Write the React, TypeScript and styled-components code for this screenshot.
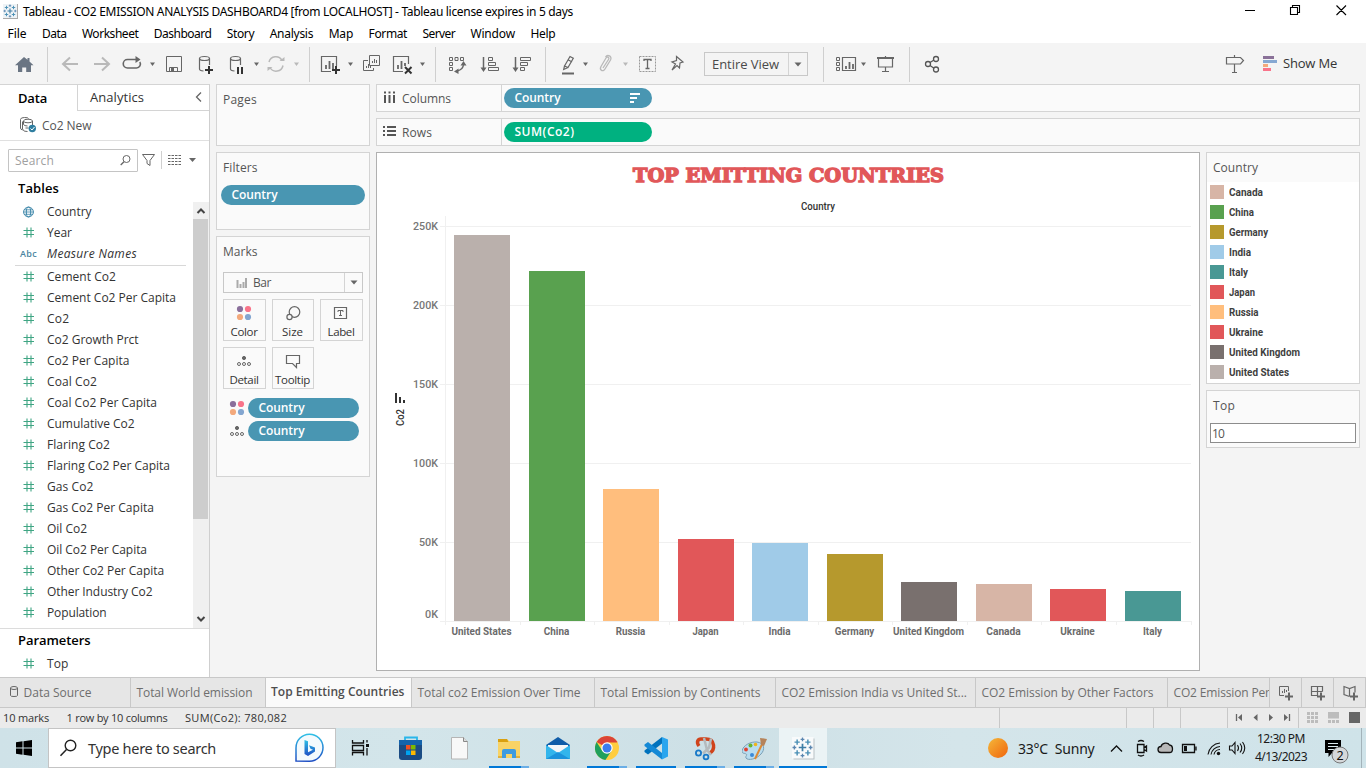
import React, { useLayoutEffect, useRef, useState } from "react";
import styled, { createGlobalStyle, css } from "styled-components";

const UI = `"Open Sans", "Noto Sans", sans-serif`;
const SYS = `"Noto Sans", "Open Sans", sans-serif`;
const COND = `Roboto, "Liberation Sans", sans-serif`;

const Global = createGlobalStyle`
  *, *::before, *::after { box-sizing: border-box; }
  body { margin: 0; overflow: hidden; background: #f4f4f4; font-family: ${UI}; }
  svg { display: block; flex: none; }
`;

/* ---------- text that keeps a set measure ---------- */

const Measure = styled.span<{ $w: number }>`
  display: inline-block;
  flex: none;
  width: ${(p) => p.$w}px;
  white-space: pre;
`;
const Ink = styled.span`
  display: inline-block;
  transform-origin: 0 50%;
`;

function Fit({ w, squeeze, children }: { w: number; squeeze?: boolean; children: string }) {
  const ref = useRef<HTMLSpanElement>(null);
  const [style, setStyle] = useState<React.CSSProperties>({});
  useLayoutEffect(() => {
    const natural = ref.current!.getBoundingClientRect().width;
    setStyle(
      squeeze
        ? { transform: `scaleX(${w / natural})` }
        : { letterSpacing: `${(w - natural) / children.length}px` }
    );
  }, []);
  return (
    <Measure $w={w}>
      <Ink ref={ref} style={style}>{children}</Ink>
    </Measure>
  );
}

/* An icon drawn on the window's own grid: the view box starts at (x, y). */
function Glyph({ x, y, w, h, children }: { x: number; y: number; w: number; h: number; children?: React.ReactNode }) {
  return (
    <svg width={w} height={h} viewBox={`${x} ${y} ${w} ${h}`} fill="none">
      {children}
    </svg>
  );
}

/* ---------- shell ---------- */

const Window = styled.div`
  width: 1366px;
  height: 768px;
  display: flex;
  flex-direction: column;
  background: #f4f4f4;
  overflow: hidden;
`;
const TitleBar = styled.div`
  height: 23px;
  display: flex;
  background: #fff;
  font: 12px/24px ${SYS};
  color: #000;
`;
const TitleText = styled.div`
  flex: 1;
  padding-left: 3px;
`;
const MenuBar = styled.div`
  height: 20px;
  padding-left: 7.5px;
  display: flex;
  gap: 15.45px;
  background: #fff;
  font: 12px/21px ${SYS};
  color: #000;
`;
const ToolBar = styled.div`
  height: 41px;
  display: flex;
  background: #f4f4f4;
`;
const ViewSelect = styled.div`
  width: 104px;
  height: 24px;
  margin-top: 9px;
  border: 1px solid #c8c8c8;
  display: flex;
  font: 13px/21px ${UI};
  color: #4a4a4a;
`;
const SelectLabel = styled.div<{ $pad: number }>`
  flex: 1;
  display: flex;
  align-items: center;
  padding-left: ${(p) => p.$pad}px;
`;
const SelectArrow = styled.div<{ $w: number }>`
  width: ${(p) => p.$w}px;
  border-left: 1px solid #d4d4d4;
  display: flex;
  align-items: center;
  justify-content: center;
`;
const ShowMe = styled.div`
  font: 13px/41px ${UI};
  color: #333;
`;
const Spacer = styled.div`
  flex: 1;
`;
const Workspace = styled.div`
  height: 593px;
  display: flex;
`;

/* ---------- data pane ---------- */

const DataPane = styled.aside`
  width: 210px;
  border-right: 1px solid #cfcfcf;
  border-top: 1px solid #d4d4d4;
  background: #fff;
  display: flex;
  flex-direction: column;
`;
const PaneTabs = styled.div`
  height: 26px;
  display: flex;
  font: 13px/26px ${UI};
`;
const DataTab = styled.div`
  width: 77px;
  padding-left: 18px;
  font-weight: 600;
  color: #000;
`;
const AnalyticsTab = styled.div`
  flex: 1;
  display: flex;
  justify-content: space-between;
  padding-left: 12px;
  border-left: 1px solid #d4d4d4;
  border-bottom: 1px solid #d4d4d4;
  line-height: 25px;
  color: #333;
`;
const Source = styled.div`
  height: 30px;
  display: flex;
  border-bottom: 1px solid #e0e0e0;
  font: 12px/29px ${UI};
  color: #555;
`;
const SearchRow = styled.div`
  height: 36px;
  padding: 8px 0 0 8px;
  display: flex;
`;
const SearchBox = styled.div`
  width: 130px;
  height: 23px;
  border: 1px solid #c4c4c4;
  border-radius: 1px;
  display: flex;
  justify-content: space-between;
  padding-left: 6px;
  font: 12px/22px ${UI};
  color: #a0a0a0;
`;
const Heading = styled.div<{ $h: number; $lh: number }>`
  height: ${(p) => p.$h}px;
  padding-left: 18px;
  font: 600 13px/${(p) => p.$lh}px ${UI};
  color: #000;
`;
const FieldArea = styled.div`
  height: 428px;
  display: flex;
  justify-content: space-between;
  border-bottom: 1px solid #dcdcdc;
`;
const FieldList = styled.div`
  width: 190px;
`;
const FieldRow = styled.div<{ $italic?: boolean }>`
  height: 21px;
  display: flex;
  align-items: center;
  padding-left: 20px;
  font: ${(p) => (p.$italic ? "italic" : "normal")} 12px/21px ${UI};
  color: #333;
`;
const FieldIcon = styled.div`
  width: 27px;
  font: 600 9px/21px ${UI};
  color: #4a84a0;
`;
const FieldRule = styled.div`
  height: 1px;
  margin: 1px 4px 0 15px;
  background: #d8d8d8;
`;
const ScrollBar = styled.div`
  width: 16px;
  margin-top: 1px;
  background: #f0f0f0;
  display: flex;
  flex-direction: column;
  justify-content: space-between;
`;
const ScrollThumb = styled.div`
  width: 15px;
  height: 300px;
  margin-bottom: auto;
  background: #cdcdcd;
`;

/* ---------- shelves & cards ---------- */

const CardColumn = styled.div`
  width: 154px;
  margin-left: 6px;
  display: flex;
  flex-direction: column;
  gap: 6px;
`;
const Card = styled.section<{ $h: number }>`
  height: ${(p) => p.$h}px;
  background: #fafafa;
  border: 1px solid #d4d4d4;
`;
const CardTitle = styled.div`
  height: 30px;
  padding-left: 6px;
  font: 12px/30px ${UI};
  color: #555;
`;
const Pill = styled.div<{ $w: number; $color?: string }>`
  width: ${(p) => p.$w}px;
  height: 20px;
  flex: none;
  border-radius: 10px;
  background: ${(p) => p.$color || "#4996b2"};
  display: flex;
  justify-content: space-between;
  padding-left: 10.5px;
  font: 600 12px/20px ${UI};
  color: #fff;
`;
const FilterSlot = styled.div`
  padding: 2px 0 0 4px;
`;
const MarkType = styled.div`
  width: 140px;
  height: 21px;
  margin: 5px 0 6px 6px;
  border: 1px solid #c8c8c8;
  display: flex;
  font: 12px/20px ${UI};
  color: #555;
`;
const MarkButtons = styled.div`
  display: grid;
  grid-template-columns: 43px 42px 43px;
  gap: 6px;
  padding-left: 6px;
`;
const MarkButton = styled.div`
  height: 42px;
  padding-right: 1px;
  border: 1px solid #d4d4d4;
  display: flex;
  flex-direction: column;
  align-items: center;
  font: 11.5px/15px ${UI};
  color: #333;
`;
const MarkPills = styled.div`
  padding: 9px 0 0 11px;
  display: flex;
  flex-direction: column;
  gap: 3px;
`;
const MarkPillRow = styled.div`
  display: flex;
  gap: 1px;
`;
const Main = styled.div`
  width: 984px;
  margin-left: 6px;
  display: flex;
  flex-direction: column;
  gap: 6px;
`;
const Shelf = styled.div`
  height: 28px;
  border: 1px solid #d4d4d4;
  background: #fafafa;
  display: flex;
`;
const ShelfName = styled.div`
  width: 125px;
  display: flex;
  border-right: 1px solid #d4d4d4;
  font: 12px/27px ${UI};
  color: #555;
`;
const ShelfPills = styled.div`
  padding: 3px 0 0 2px;
`;
const Stage = styled.div`
  display: flex;
  gap: 6px;
`;
const View = styled.div`
  width: 824px;
  height: 519px;
  border: 1px solid #b0b0b0;
  background: #fff;
`;
const Side = styled.div`
  width: 154px;
  display: flex;
  flex-direction: column;
  gap: 6px;
`;
const LegendBody = styled.div`
  height: 201px;
  margin-top: -1px;
  background: #fff;
  padding-left: 3px;
`;
const LegendItem = styled.div`
  height: 20px;
  display: flex;
  gap: 5px;
  align-items: center;
  font: 700 11.5px/20px ${COND};
  color: #3f3f3f;
`;
const Swatch = styled.div<{ $color: string }>`
  width: 14px;
  height: 14px;
  background: ${(p) => p.$color};
`;
const TopInput = styled.div`
  width: 146px;
  height: 20px;
  margin: 2px 0 0 3px;
  padding-left: 1px;
  border: 1px solid #8c8c8c;
  background: #fff;
  font: 12px/19px ${UI};
  color: #555;
`;

/* ---------- bottom ---------- */

const SheetTabs = styled.div`
  height: 31px;
  display: flex;
  border-top: 1px solid #c8c8c8;
  border-bottom: 1px solid #c8c8c8;
  background: #e6e6e6;
`;
const SheetTab = styled.div<{ $w: number; $active?: boolean }>`
  width: ${(p) => p.$w}px;
  flex: none;
  display: flex;
  padding-left: 5.5px;
  overflow: hidden;
  border-right: 1px solid #c8c8c8;
  font: 12px/30px ${UI};
  color: #6e6e6e;
  ${(p) =>
    p.$active &&
    css`
      background: #fafafa;
      font-weight: 600;
      line-height: 28px;
      color: #4e4e4e;
      padding-left: 5px;
    `}
`;
const NewSheet = styled.div`
  width: 32px;
  border-right: 1px solid #c8c8c8;
`;
const StatusBar = styled.div`
  height: 20px;
  display: flex;
  background: #ebebeb;
  font: 11px/20px ${UI};
  color: #333;
`;
const StatusText = styled.div`
  width: 1000px;
  padding-left: 3px;
  display: flex;
  gap: 17.5px;
  border-right: 1px solid #c8c8c8;
`;
const StatusCell = styled.div<{ $w: number }>`
  width: ${(p) => p.$w}px;
  border-right: 1px solid #c8c8c8;
`;
const TaskBar = styled.div`
  height: 40px;
  display: flex;
  background: linear-gradient(90deg, #cfe2e8, #d3e5ea 30%, #cde0e6 52%, #d4e5ea 70%, #cfe3e9);
  font-family: ${SYS};
  color: #1a1a1a;
`;
const TaskSearch = styled.div`
  width: 288px;
  border: 1px solid #c4c4c4;
  background: #fff;
  display: flex;
  font-size: 14.5px;
  line-height: 39px;
  color: #333;
`;
const TaskApp = styled.div<{ $w: number; $open?: boolean; $more?: boolean; $active?: boolean }>`
  width: ${(p) => p.$w}px;
  height: 40px;
  display: flex;
  flex-direction: column;
  align-items: center;
  background: ${(p) => (p.$active ? "#ebf3f5" : "none")};
  &::after {
    content: "";
    width: ${(p) => (p.$active ? 48 : 40)}px;
    height: 2px;
    background: ${(p) =>
      p.$active || (p.$open && !p.$more)
        ? "#0078d7"
        : p.$open
        ? "linear-gradient(90deg, #0078d7 32px, #6aaee6 32px)"
        : "none"};
  }
`;
const Weather = styled.div`
  width: 86px;
  font-size: 14px;
  line-height: 42px;
`;
const Clock = styled.div`
  width: 60px;
  display: flex;
  flex-direction: column;
  align-items: center;
  padding-top: 2px;
  font-size: 12px;
  line-height: 18px;
`;

/* ---------- small drawings ---------- */

const G = "#666";
const L = "#b9b9b9";
const Caret = ({ x, y = 64, c = G }: { x: number; y?: number; c?: string }) => (
  <path d={`M${x - 2.5} ${y - 1.5}h5l-2.5 3.5z`} fill={c} />
);
const Sep = ({ x }: { x: number }) => <path d={`M${x + 0.5} 47v35`} stroke="#cfcfcf" />;
const Plus = ({ x, y, c = "#333", r = 4 }: { x: number; y: number; c?: string; r?: number }) => (
  <path d={`M${x - r} ${y}h${2 * r}M${x} ${y - r}v${2 * r}`} stroke={c} strokeWidth="2" />
);
const Dots = ({ x, y, r = 3.1 }: { x: number; y: number; r?: number }) => (
  <g>
    <circle cx={x - 4} cy={y - 4} r={r} fill="#8a6f9b" />
    <circle cx={x + 4} cy={y - 4} r={r} fill="#f9748a" />
    <circle cx={x - 4} cy={y + 4} r={r} fill="#f3a97c" />
    <circle cx={x + 4} cy={y + 4} r={r} fill="#83a6d0" />
  </g>
);
const DetailDots = ({ x, y }: { x: number; y: number }) => (
  <g stroke={G}>
    <circle cx={x} cy={y - 3} r="1.6" fill={G} />
    <circle cx={x - 5} cy={y + 3} r="1.5" />
    <circle cx={x} cy={y + 3} r="1.5" />
    <circle cx={x + 5} cy={y + 3} r="1.5" />
  </g>
);
const Cross = ({ x, y, r, c, s = 1 }: { x: number; y: number; r: number; c: string; s?: number }) => (
  <path d={`M${x - r} ${y}h${2 * r}M${x} ${y - r}v${2 * r}`} stroke={c} strokeWidth={s} />
);
const TableauMark = ({ x, y, k = 1 }: { x: number; y: number; k?: number }) => (
  <g>
    <Cross x={x} y={y} r={2.6 * k} c="#3f7ea6" s={1.2 * k} />
    {[[-1, -1], [1, -1], [-1, 1], [1, 1]].map(([a, b]) => (
      <Cross key={`${a}${b}`} x={x + a * 3.7 * k} y={y + b * 3.7 * k} r={1.8 * k} c="#4a8fb5" s={k} />
    ))}
    {[[0, -1], [0, 1], [-1, 0], [1, 0]].map(([a, b]) => (
      <Cross key={`${a}${b}`} x={x + a * 5.6 * k} y={y + b * 5.6 * k} r={1.3 * k} c="#5a86b0" s={0.9 * k} />
    ))}
  </g>
);
const Hash = () => (
  <Glyph x={0} y={0} w={27} h={11}>
    <path d="M7 .5v10M11 .5v10M3.500 3.500h10.500M3.500 7.500h10.500" stroke="#3fa583" strokeWidth="1.100" />
  </Glyph>
);

/* ---------- data ---------- */

const menus: [string, number][] = [
  ["File", 19], ["Data", 24.5], ["Worksheet", 56.5], ["Dashboard", 57.5], ["Story", 27.5], ["Analysis", 43.5],
  ["Map", 24.5], ["Format", 38.5], ["Server", 32.5], ["Window", 44.5], ["Help", 25],
];
const measures: [string, number][] = [
  ["Cement Co2", 69], ["Cement Co2 Per Capita", 129], ["Co2", 22.5], ["Co2 Growth Prct", 91.5],
  ["Co2 Per Capita", 82.5], ["Coal Co2", 50], ["Coal Co2 Per Capita", 110], ["Cumulative Co2", 87.5],
  ["Flaring Co2", 63], ["Flaring Co2 Per Capita", 123], ["Gas Co2", 46.5], ["Gas Co2 Per Capita", 107],
  ["Oil Co2", 40], ["Oil Co2 Per Capita", 100], ["Other Co2 Per Capita", 117], ["Other Industry Co2", 105.5],
  ["Population", 59.5],
];
const legend: [string, string, number][] = [
  ["Canada", "#d7b5a6", 34], ["China", "#59a14f", 25], ["Germany", "#b6992d", 39], ["India", "#a0cbe8", 22],
  ["Italy", "#499894", 19], ["Japan", "#e15759", 26], ["Russia", "#ffbe7d", 29.5], ["Ukraine", "#e15759", 34],
  ["United Kingdom", "#79706e", 71], ["United States", "#bab0ac", 60],
];
const bars: [string, string, number, number, number][] = [
  ["United States", "#bab0ac", 454, 235, 60], ["China", "#59a14f", 529, 271, 25.5], ["Russia", "#ffbe7d", 603, 489, 29.5],
  ["Japan", "#e15759", 678, 539, 26], ["India", "#a0cbe8", 752, 543, 22], ["Germany", "#b6992d", 827, 554, 39.5],
  ["United Kingdom", "#79706e", 901, 582, 71], ["Canada", "#d7b5a6", 976, 584, 34.5],
  ["Ukraine", "#e15759", 1050, 589, 34.5], ["Italy", "#499894", 1125, 591, 19],
];
const ticks: [string, number, number, number][] = [
  ["250K", 226, 230, 25], ["200K", 305, 309, 25], ["150K", 384, 388, 25],
  ["100K", 463, 467, 25], ["50K", 542, 546, 19], ["0K", 621, 618, 13],
];
const sheets: [string, number, number][] = [
  ["Total co2 Emission Over Time", 183, 163], ["Total Emission by Continents", 181, 160],
  ["CO2 Emission India vs United St...", 200, 185.5], ["CO2 Emission by Other Factors", 192, 172],
  ["CO2 Emission Per Capita", 102, 134],
];

function Chart() {
  return (
    <svg width={822} height={517} viewBox="377 153 822 517">
      <text x={633} y={182} textLength={311} lengthAdjust="spacingAndGlyphs" fontFamily='"DejaVu Serif", serif'
        fontWeight={700} fontSize={18.5} fill="#e15759" stroke="#e15759" strokeWidth={1.4}>
        TOP EMITTING COUNTRIES
      </text>
      <text x={801} y={210} textLength={34} lengthAdjust="spacingAndGlyphs" fontFamily={COND} fontWeight={500} fontSize={11} fill="#333">
        Country
      </text>
      {ticks.map(([t, gy, ty, w]) => (
        <g key={t}>
          <path d={`M440 ${gy + 0.5}H1191`} stroke="#f0f0f0" />
          <text x={438 - w} y={ty} textLength={w} lengthAdjust="spacingAndGlyphs" fontFamily={COND} fontWeight={500} fontSize={11.5} fill="#777">
            {t}
          </text>
        </g>
      ))}
      <path d="M445.5 216V625" stroke="#f0f0f0" />
      {bars.map(([n, c, x, top, w], i) => (
        <g key={n}>
          <rect x={x} y={top} width={56} height={621 - top} fill={c} />
          <path d={`M${Math.round(445 + (i + 1) * 74.55) + 0.5} 621v4`} stroke="#f0f0f0" />
          <text x={x + 27.5 - w / 2} y={635} textLength={w} lengthAdjust="spacingAndGlyphs" fontFamily={COND} fontWeight={700} fontSize={11} fill="#6b6b6b">
            {n}
          </text>
        </g>
      ))}
      <path d="M396 393v10M400 397v6M404 400v3" stroke="#333" strokeWidth="2" fill="none" />
      <text transform="translate(404 426) rotate(-90)" textLength={17} lengthAdjust="spacingAndGlyphs" fontFamily={COND} fontWeight={500} fontSize={11} fill="#333">
        Co2
      </text>
    </svg>
  );
}

function ToolIcons() {
  return (
    <>
      <Glyph x={0} y={43} w={60} h={41}>
        <path d="M24 57l-9 8.3h3V72h4.2v-4.5h4V72H31v-6.700h2.500l-4-3.700V58h-2v1.800z" fill="#6a7583" />
        <Sep x={47} />
      </Glyph>
      <Glyph x={60} y={43} w={100} h={41}>
        <path d="M78 64H63.500M70 57.500L63 64l7 6.500M94 64h14.500M102 57.500l7 6.500-7 6.500" stroke={L} strokeWidth="2" />
        <path d="M133 59.500h-5.500a4.200 4.200 0 0 0 0 8.500h9a3.900 3.900 0 0 0 3.300-6M130 59.500h7" stroke={G} strokeWidth="1.600" />
        <path d="M135.500 56l5 3.500-5 3.500z" fill={G} />
        <Caret x={152.5} />
      </Glyph>
      <Glyph x={160} y={43} w={105} h={41}>
        <path d="M166.500 56.500h15v15h-15zM169.500 71v-3.500h8V71" stroke={G} />
        <path d="M171 68h3v4h-3z" fill={G} />
        <g stroke={G} strokeWidth="1.200">
          <ellipse cx="204.500" cy="58.500" rx="5" ry="2" />
          <path d="M199.500 58.500V69c0 1 1.500 1.800 4 2M209.500 58.500V65" />
          <ellipse cx="235.500" cy="58.500" rx="5" ry="2" />
          <path d="M230.500 58.500V69c0 1 1.500 1.800 4 2M240.500 58.500V65" />
        </g>
        <Plus x={209} y={70} />
        <path d="M238 67v7M242 67v7" stroke="#333" strokeWidth="2" />
        <Caret x={256.5} />
      </Glyph>
      <Glyph x={265} y={43} w={50} h={41}>
        <path d="M269 62a7 7 0 0 1 13-1.500M283 65.500a7 7 0 0 1-13 2" stroke={L} strokeWidth="1.500" />
        <path d="M279.500 61h5v-4zM272.500 67h-5v4z" fill={L} />
        <Caret x={296.5} c={L} />
        <Sep x={309} />
      </Glyph>
      <Glyph x={315} y={43} w={130} h={41}>
        <g stroke={G}>
          <path d="M331 71.500h-9.500v-15h15V66" strokeWidth="1.200" />
          <path d="M326 69v-4M329.500 69v-8M333 69v-6" strokeWidth="1.800" />
          <path d="M369.500 55.500h10v10h-10zM368 60.500h-4.500v10h10V68" />
          <path d="M372.500 63v-2M374.500 63v-4M376.500 63v-3M366.500 68v-2M368.500 68v-4M370.500 68v-2" />
          <path d="M403 71.500h-9.500v-15h15V64" strokeWidth="1.200" />
          <path d="M398 69v-4M401.500 69v-8M405 66v-3" strokeWidth="1.800" />
        </g>
        <Plus x={336} y={70} />
        <path d="M405 67l6.500 6.500M411.500 67l-6.500 6.500" stroke="#333" strokeWidth="2" />
        <Caret x={350.5} />
        <Caret x={422.5} />
        <Sep x={435} />
      </Glyph>
      <Glyph x={445} y={43} w={105} h={41}>
        <g stroke={G}>
          <path d="M449.500 57.500h3v3h-3zM455 57.500h3v3h-3zM460.500 57.500h3v3h-3zM449.500 62.500h3v3h-3zM449.500 67.500h3v3h-3z" />
          <path d="M463.500 64c0 4-2 6-6.500 7" strokeWidth="1.300" />
          <path d="M483.500 57v13M515.500 57v13" strokeWidth="1.500" />
          <path d="M488.500 57.500h4v3h-4zM488.500 62.500h7v3h-7zM488.500 67.500h10v3h-10zM520.500 57.500h10v3h-10zM520.500 62.500h7v3h-7zM520.500 67.500h4v3h-4z" />
        </g>
        <path d="M463.500 61l3 4.500h-6zM454 71.500l4.500-3v5.500zM480.500 67.500h6l-3 4.500zM512.500 67.500h6l-3 4.500z" fill={G} />
        <Sep x={545} />
      </Glyph>
      <Glyph x={550} y={43} w={154} h={41}>
        <g stroke={G} strokeWidth="1.200">
          <path d="M564.500 66l5.500-9.500 3.300 1.800-5.300 9.200zM564.500 66l-.8 3.500 4.300-2M568.500 60l3.500 2" />
          <path d="M562 73.500h12" strokeWidth="2" />
          <path d="M676.500 56.500l6.500 5.500-3 1-.5 5-2.500-2.500-5 4.500 3.500-6-3.500-2 4.500-1.500z" />
        </g>
        <path d="M603 68l5.500-8.500c1.300-2-1.300-3.500-2.500-1.500l-5 8.500c-2 3.500 2 6 4 2.500l5.500-9c2-3.800-3-6-5-3" stroke={L} strokeWidth="1.300" />
        <path d="M639.500 56.500h16v15h-16z" stroke="#999" strokeDasharray="2 1" />
        <path d="M644 61v-1.500h7V61M647.500 60v8M645.500 68.500h4" stroke={G} strokeWidth="1.300" />
        <Caret x={585.5} />
        <Caret x={625.5} c={L} />
      </Glyph>
      <ViewSelect>
        <SelectLabel $pad={7}><Fit w={67}>Entire View</Fit></SelectLabel>
        <SelectArrow $w={19}><Glyph x={0} y={0} w={8} h={5}><path d="M.5 .5h7L4 4.500z" fill={G} /></Glyph></SelectArrow>
      </ViewSelect>
      <Glyph x={808} y={43} w={150} h={41}>
        <Sep x={823} />
        <g stroke={G}>
          <path d="M836.500 57.500h3v3h-3zM836.500 62.500h3v3h-3zM836.500 67.500h3v3h-3z" />
          <path d="M842.500 57.500h13v13h-13z" strokeWidth="1.200" />
          <path d="M846 69v-3M849.500 69v-7M853 69v-5" strokeWidth="1.800" />
          <path d="M877 58h17" strokeWidth="2" />
          <path d="M878.500 59v8h14v-8M885.500 56v2M885.500 67v5M882 71.500h7" strokeWidth="1.200" />
        </g>
        <Caret x={863.5} />
        <Sep x={909} />
        <g stroke="#555" strokeWidth="1.300">
          <circle cx="928" cy="64" r="2.500" />
          <circle cx="936" cy="59" r="2.500" />
          <circle cx="936" cy="69.500" r="2.500" />
          <path d="M930 62.500l4-2.500M930 65.500l4 2.700" />
        </g>
      </Glyph>
      <Spacer />
      <Glyph x={1220} y={43} w={63} h={41}>
        <path d="M1226.500 57.500h14l3 3-3 3.500h-14zM1234.500 55v2M1234.500 64v8.500M1232 72.500h5" stroke={G} strokeWidth="1.200" />
        <path d="M1263 56h11v3h-11z" fill="#8a7198" />
        <path d="M1263 60h14v3h-14z" fill="#86a8d2" />
        <path d="M1263 64h5v3h-5z" fill="#f3a97c" />
        <path d="M1263 68h8v3h-8z" fill="#f9748a" />
      </Glyph>
    </>
  );
}

function Taskbar() {
  return (
    <TaskBar>
      <Glyph x={0} y={728} w={48} h={40}>
        <path d="M16 742.200l6.500-.9v6.200H16zM23.500 741.200l8.500-1.200v7.500h-8.500zM16 748.500h6.500v6.200l-6.500-.9zM23.500 748.500H32v7.500l-8.500-1.200z" fill="#000" />
      </Glyph>
      <TaskSearch>
        <Glyph x={49} y={729} w={39} h={39}>
          <circle cx="70.500" cy="745.500" r="5.300" stroke="#222" strokeWidth="1.400" />
          <path d="M66.500 749.500l-6 6.300" stroke="#222" strokeWidth="1.500" />
        </Glyph>
        <Fit w={128}>Type here to search</Fit>
        <Spacer />
        <Glyph x={290} y={729} w={45} h={39}>
          <defs>
            <linearGradient id="bing" x1="0" y1="0" x2="0" y2="1"><stop stopColor="#2fc0e6" /><stop offset="1" stopColor="#1f4fc4" /></linearGradient>
          </defs>
          <path d="M296 761v-13a13.500 13.500 0 1 1 13.500 13.200z" fill="#f4fafd" stroke="url(#bing)" strokeWidth="1.500" />
          <path d="M304.500 740l3.500 1.300v11l5-2.500-2.500-1-1.500-3.500 6 2.200v4l-7 4.500-3.500-2z" fill="url(#bing)" />
        </Glyph>
      </TaskSearch>
      <Glyph x={336} y={728} w={51} h={40}>
        <path d="M352.500 740v3h11v-3M352.500 755.500v-3h11v3M352.500 745.500h11v5h-11zM367 740v2.500M367 748v7.500" stroke="#111" strokeWidth="1.300" />
        <path d="M366 744h3v3h-3z" fill="#111" />
      </Glyph>
      <TaskApp $w={48}>
        <Glyph x={399} y={728} w={24} h={38}>
          <path d="M405 741v-3.500h12v3.500" stroke="#29b6ea" strokeWidth="1.800" />
          <path d="M399 740h23v17q0 3-3 3h-17q-3 0-3-3z" fill="#1b4c84" />
          <path d="M399 740h23v5h-23z" fill="#1564ac" />
          <path d="M406 745h4.500v4.500H406z" fill="#f25022" /><path d="M411 745h4.500v4.500H411z" fill="#7fba00" />
          <path d="M406 750.500h4.500v4.500H406z" fill="#00a4ef" /><path d="M411 750.500h4.500v4.500H411z" fill="#ffb900" />
        </Glyph>
      </TaskApp>
      <TaskApp $w={50}>
        <Glyph x={450} y={728} w={20} h={38}>
          <path d="M451.500 737.500h12l4 4v17.500h-16z" fill="#f8f8f8" stroke="#b5b5b5" />
          <path d="M463.500 737.500v4h4" stroke="#888" fill="#ddd" />
        </Glyph>
      </TaskApp>
      <TaskApp $w={48} $open $more>
        <Glyph x={497} y={728} w={24} h={38}>
          <path d="M498 739h9l2 2h11v17h-22z" fill="#f8d366" />
          <path d="M498 739h9l1.500 3H498z" fill="#d9a010" />
          <path d="M502 758v-7q0-2 2-2h10q2 0 2 2v7h-4v-4h-6v4z" fill="#3d9be0" />
          <path d="M498 756h4v2h-4zM516 756h4v2h-4z" fill="#e2b13c" />
        </Glyph>
      </TaskApp>
      <TaskApp $w={50}>
        <Glyph x={546} y={728} w={24} h={38}>
          <path d="M546 745l12-8 12 8v4h-24z" fill="#0f5ca8" />
          <path d="M548 745h20v8h-20z" fill="#f4f6f8" />
          <path d="M546 745l12 8 12-8v14h-24z" fill="#32b5ec" />
          <path d="M546 759l12-7 12 7z" fill="#1b93dc" />
        </Glyph>
      </TaskApp>
      <TaskApp $w={48} $open $more>
        <Glyph x={595} y={728} w={24} h={38}>
          <circle cx="607" cy="748" r="12" fill="#ffcd40" />
          <path d="M607 748L596.600 742a12 12 0 0 1 20.800 0l-.5.500H607z" fill="#db4437" />
          <path d="M596.600 742a12 12 0 0 0 8.800 18l6.200-9.200-9.200.2z" fill="#1fa05c" />
          <circle cx="607" cy="748" r="5.700" fill="#fff" />
          <circle cx="607" cy="748" r="4.500" fill="#3b7ded" />
        </Glyph>
      </TaskApp>
      <TaskApp $w={50} $open>
        <Glyph x={644} y={728} w={24} h={38}>
          <path d="M662 737l6 2.500v17l-6 3z" fill="#2aa5ee" />
          <path d="M662 737v6.500L648 754.500l-3.500-2.500v-1.500z" fill="#0072bd" />
          <path d="M662 759.500V753L648 742l-3.500 2.500v1.500z" fill="#1489d6" />
        </Glyph>
      </TaskApp>
      <TaskApp $w={48} $open $more>
        <Glyph x={693} y={728} w={24} h={38}>
          <path d="M699 746c-3-4-1-7 2-7h5c9 0 10 11 3 14.500" stroke="#d0431b" strokeWidth="3.500" />
          <path d="M704 738l3 12 4 5M711 738.500l-2 9-6 6" stroke="#b4babd" strokeWidth="2.500" />
          <circle cx="698.500" cy="753" r="2.600" stroke="#1a79c8" strokeWidth="1.800" />
          <circle cx="706" cy="757" r="2.400" stroke="#1a79c8" strokeWidth="1.800" />
        </Glyph>
      </TaskApp>
      <TaskApp $w={50} $open $more>
        <Glyph x={742} y={728} w={25} h={38}>
          <path d="M742 751c1-6 9-9.500 15-9 8 1 8 8 4 12-4 5-13 7-15 4-1-2 2-3 0-4-1-1-4 0-4-3z" fill="#b8dcef" stroke="#7a9fb5" />
          <circle cx="746" cy="749.500" r="1.900" fill="#e0402f" /><circle cx="750.500" cy="745.500" r="2" fill="#67b331" />
          <circle cx="755.500" cy="744.500" r="1.800" fill="#f0b41c" /><circle cx="752" cy="755" r="2" fill="#3b8ad8" />
          <path d="M764.500 739l-9.500 20" stroke="#dd8a35" strokeWidth="2" />
          <path d="M760 738l7 1-3 7-3-1z" fill="#b5835a" />
        </Glyph>
      </TaskApp>
      <TaskApp $w={48} $active>
        <Glyph x={792} y={728} w={24} h={38}>
          <path d="M794.500 738.500h21v21h-21z" fill="#b8c0c4" />
          <path d="M793 737h21.500v21.500H793z" fill="#f8fafb" />
          <TableauMark x={803.5} y={747.5} k={1.45} />
        </Glyph>
      </TaskApp>
      <Spacer />
      <Glyph x={985} y={728} w={33} h={40}>
        <defs><linearGradient id="sun" x1="0" y1="0" x2="1" y2="1"><stop stopColor="#f5b83a" /><stop offset="1" stopColor="#f0640c" /></linearGradient></defs>
        <circle cx="998" cy="748" r="10" fill="url(#sun)" />
      </Glyph>
      <Weather><Fit w={76.5}>{"33°C  Sunny"}</Fit></Weather>
      <Glyph x={1104} y={728} w={147} h={40}>
        <g stroke="#111" strokeWidth="1.300">
          <path d="M1111 751.500l5.500-5.500 5.500 5.500" />
          <path d="M1137.500 744.500h6.500v8h-6.500zM1144 747.500l2.500-1.500v5l-2.500-1.500M1138 741.500q3-2 6 0M1138 755q3 2 6 0" />
          <path d="M1161 752.500a3 3 0 0 1 0-6c1-4 7-4.500 8.500-1.500 4 .5 4 7.500 0 7.500z" fill="#b8b8b8" />
          <path d="M1182.500 744.500h12v8h-12zM1196 746.500v4" />
          <path d="M1208 754.500a13 13 0 0 1 12-11.500M1211 754.500a9.500 9.500 0 0 1 9-8M1214 754.500a6 6 0 0 1 6-5" strokeWidth="1.100" />
          <path d="M1229.500 746h2.500l3-3.500v11l-3-3.500h-2.500zM1237.500 745q2 3 0 6M1240 743.500q3.500 4.500 0 9M1242.500 742q4.500 6 0 12" strokeWidth="1.100" />
        </g>
        <path d="M1184 746h3v5h-3z" fill="#111" />
        <circle cx="1218.500" cy="753.500" r="1.700" fill="#111" />
      </Glyph>
      <Clock>
        <Fit w={48}>12:30 PM</Fit>
        <Fit w={52}>4/13/2023</Fit>
      </Clock>
      <Glyph x={1311} y={728} w={55} h={40}>
        <path d="M1325 740h16v13h-9l-3.500 4v-4h-3.500z" fill="#000" />
        <path d="M1328 743.500h10M1328 746.500h10M1328 749.500h7" stroke="#dce9ed" />
        <circle cx="1340" cy="755" r="8" fill="#d5d8da" stroke="#777" />
        <text x="1336.500" y="759.500" fontFamily={SYS} fontSize="12.500" fill="#111">2</text>
        <path d="M1361.500 728v40" stroke="#a3b3ba" />
      </Glyph>
    </TaskBar>
  );
}

export default function App() {
  return (
    <Window>
      <Global />
      <TitleBar>
        <Glyph x={0} y={0} w={20} h={23}>
          <path d="M3 4h15v15H3z" fill="#aaa" />
          <path d="M3 4h14v14H3z" fill="#eef3f6" />
          <TableauMark x={10} y={11} k={0.95} />
        </Glyph>
        <TitleText>
          <Fit w={550}>Tableau - CO2 EMISSION ANALYSIS DASHBOARD4 [from LOCALHOST] - Tableau license expires in 5 days</Fit>
        </TitleText>
        <Glyph x={1240} y={0} w={126} h={23}>
          <path d="M1245 10.500h10M1290.500 7.500h7v7h-7zM1292.500 7.500v-2h7v7h-2M1336.500 5.500l9.500 9.500M1346 5.500l-9.500 9.500" stroke="#000" strokeWidth="1.100" />
        </Glyph>
      </TitleBar>
      <MenuBar>
        {menus.map(([m, w]) => <Fit key={m} w={w}>{m}</Fit>)}
      </MenuBar>
      <ToolBar>
        <ToolIcons />
        <ShowMe><Fit w={54}>Show Me</Fit></ShowMe>
        <Glyph x={1337} y={43} w={29} h={41} />
      </ToolBar>

      <Workspace>
        <DataPane>
          <PaneTabs>
            <DataTab><Fit w={29}>Data</Fit></DataTab>
            <AnalyticsTab>
              <Fit w={54}>Analytics</Fit>
              <Glyph x={190} y={85} w={19} h={25}><path d="M201 92.500l-4.500 4.500 4.500 4.500" stroke={G} strokeWidth="1.300" /></Glyph>
            </AnalyticsTab>
          </PaneTabs>
          <Source>
            <Glyph x={0} y={111} w={42} h={29}>
              <g stroke={G}>
                <path d="M20.500 119.500v8.500q0 1.500 2 2M20.500 119.500q0-2 4-2t4 1" />
                <path d="M22.500 121.500v7.500q1 3 5 2.500" />
                <ellipse cx="28" cy="121" rx="4.500" ry="1.800" />
                <path d="M32.500 121v4M23.500 121v3.500q1 1.500 4 1.500M25.500 128h3" />
              </g>
              <circle cx="32.300" cy="128.500" r="3.700" fill="#2f7ea0" />
              <path d="M30.500 128.500l1.500 1.500 2.500-3" stroke="#fff" />
            </Glyph>
            <Fit w={49.5}>Co2 New</Fit>
          </Source>
          <SearchRow>
            <SearchBox>
              <Fit w={39}>Search</Fit>
              <Glyph x={117} y={150} w={20} h={21}>
                <circle cx="126.500" cy="159" r="3.500" stroke={G} />
                <path d="M124 161.700l-3.300 3.300" stroke={G} strokeWidth="1.300" />
              </Glyph>
            </SearchBox>
            <Glyph x={138} y={149} w={66} h={23}>
              <path d="M142.500 154.500h12l-4.500 6v5l-3-2v-3z" stroke={G} />
              <path d="M161.500 151v18" stroke="#d0d0d0" />
              <path d="M168 155.500h13M168 158.500h13M168 161.500h13M168 164.500h13" stroke={G} strokeDasharray="2.500 1" />
              <path d="M189 158h7l-3.500 4z" fill={G} />
            </Glyph>
          </SearchRow>
          <Heading $h={24} $lh={22}><Fit w={41}>Tables</Fit></Heading>
          <FieldArea>
            <FieldList>
              <FieldRow>
                <FieldIcon>
                  <Glyph x={0} y={0} w={27} h={12}>
                    <g stroke="#3d87aa"><circle cx="8.500" cy="6" r="4.900" /><ellipse cx="8.500" cy="6" rx="2.200" ry="4.900" /><path d="M4.500 3.800h8M3.500 6h10M4.500 8.300h8" strokeWidth=".8" /></g>
                  </Glyph>
                </FieldIcon>
                <Fit w={44.5}>Country</Fit>
              </FieldRow>
              <FieldRow><Hash /><Fit w={25}>Year</Fit></FieldRow>
              <FieldRow $italic>
                <FieldIcon><Fit w={17}>Abc</Fit></FieldIcon>
                <Fit w={90}>Measure Names</Fit>
              </FieldRow>
              <FieldRule />
              {measures.map(([m, w]) => (
                <FieldRow key={m}><Hash /><Fit w={w}>{m}</Fit></FieldRow>
              ))}
            </FieldList>
            <ScrollBar>
              <Glyph x={193} y={202} w={16} h={17}><path d="M197.500 213l3.500-3.500 3.500 3.500" stroke="#444" strokeWidth="2" /></Glyph>
              <ScrollThumb />
              <Glyph x={193} y={611} w={16} h={17}><path d="M197.500 617l3.500 3.500 3.500-3.500" stroke="#444" strokeWidth="2" /></Glyph>
            </ScrollBar>
          </FieldArea>
          <Heading $h={24} $lh={23}><Fit w={72.5}>Parameters</Fit></Heading>
          <FieldRow><Hash /><Fit w={21.5}>Top</Fit></FieldRow>
        </DataPane>

        <CardColumn>
          <Card $h={62}><CardTitle><Fit w={34}>Pages</Fit></CardTitle></Card>
          <Card $h={78}>
            <CardTitle><Fit w={34.5}>Filters</Fit></CardTitle>
            <FilterSlot><Pill $w={144}><Fit w={46}>Country</Fit></Pill></FilterSlot>
          </Card>
          <Card $h={241}>
            <CardTitle><Fit w={34.5}>Marks</Fit></CardTitle>
            <MarkType>
              <SelectLabel $pad={12}>
                <Glyph x={0} y={0} w={17} h={12}><path d="M1.500 11V3M4.500 11V7M7.500 11V5M10 11V1" stroke="#aaa" strokeWidth="2" /></Glyph>
                <Fit w={18}>Bar</Fit>
              </SelectLabel>
              <SelectArrow $w={18}><Glyph x={0} y={0} w={8} h={5}><path d="M.5 .5h7L4 4.500z" fill={G} /></Glyph></SelectArrow>
            </MarkType>
            <MarkButtons>
              <MarkButton><Glyph x={234} y={300} w={20} h={24}><Dots x={244} y={313} /></Glyph><Fit w={27}>Color</Fit></MarkButton>
              <MarkButton>
                <Glyph x={283} y={300} w={20} h={24}><circle cx="294.500" cy="312" r="5.300" stroke={G} strokeWidth="1.200" /><circle cx="289.500" cy="317" r="2.600" stroke={G} strokeWidth="1.200" fill="#fafafa" /></Glyph>
                <Fit w={21}>Size</Fit>
              </MarkButton>
              <MarkButton>
                <Glyph x={331} y={300} w={20} h={24}><path d="M334.500 307.500h12v11h-12z" stroke={G} strokeWidth="1.200" /><path d="M338 312v-1.500h5v1.500M340.500 310.500v5M339 315.500h3" stroke={G} /></Glyph>
                <Fit w={27}>Label</Fit>
              </MarkButton>
              <MarkButton><Glyph x={234} y={348} w={20} h={24}><DetailDots x={244} y={361} /></Glyph><Fit w={29}>Detail</Fit></MarkButton>
              <MarkButton>
                <Glyph x={283} y={348} w={20} h={24}><path d="M286.500 355.500h13v8h-3v4l-4-4h-6z" stroke={G} strokeWidth="1.200" /></Glyph>
                <Fit w={35}>Tooltip</Fit>
              </MarkButton>
            </MarkButtons>
            <MarkPills>
              <MarkPillRow><Glyph x={228} y={398} w={19} h={20}><Dots x={237} y={408} /></Glyph><Pill $w={111}><Fit w={46}>Country</Fit></Pill></MarkPillRow>
              <MarkPillRow><Glyph x={228} y={421} w={19} h={20}><DetailDots x={237} y={431} /></Glyph><Pill $w={111}><Fit w={46}>Country</Fit></Pill></MarkPillRow>
            </MarkPills>
          </Card>
        </CardColumn>

        <Main>
          <Shelf>
            <ShelfName>
              <Glyph x={377} y={85} w={25} h={26}><path d="M385 95v8M389.500 95v8M394 95v8M384 92.500h2M388.500 92.500h2M393 92.500h2" stroke="#555" strokeWidth="2" /></Glyph>
              <Fit w={49}>Columns</Fit>
            </ShelfName>
            <ShelfPills>
              <Pill $w={148}>
                <Fit w={46}>Country</Fit>
                <Glyph x={625} y={88} w={27} h={20}><path d="M630 94h10M630 98h7M630 102h4" stroke="#fff" strokeWidth="2" /></Glyph>
              </Pill>
            </ShelfPills>
          </Shelf>
          <Shelf>
            <ShelfName>
              <Glyph x={377} y={119} w={25} h={26}><path d="M387 127h9M387 131h9M387 135h9M383 127h2M383 131h2M383 135h2" stroke="#555" strokeWidth="2" /></Glyph>
              <Fit w={30}>Rows</Fit>
            </ShelfName>
            <ShelfPills><Pill $w={148} $color="#00b180"><Fit w={60}>SUM(Co2)</Fit></Pill></ShelfPills>
          </Shelf>
          <Stage>
            <View><Chart /></View>
            <Side>
              <Card $h={232}>
                <CardTitle><Fit w={45}>Country</Fit></CardTitle>
                <LegendBody>
                  {legend.map(([n, c, w]) => (
                    <LegendItem key={n}><Swatch $color={c} /><Fit w={w} squeeze>{n}</Fit></LegendItem>
                  ))}
                </LegendBody>
              </Card>
              <Card $h={58}>
                <CardTitle><Fit w={22}>Top</Fit></CardTitle>
                <TopInput><Fit w={12}>10</Fit></TopInput>
              </Card>
            </Side>
          </Stage>
        </Main>
      </Workspace>

      <SheetTabs>
        <SheetTab $w={131}>
          <Glyph x={6} y={678} w={18} h={29}><path d="M10.500 688v7.500q0 1 3.500 1t3.500-1V688M10.500 688q0-1.500 3.500-1.500t3.500 1.500-3.500 1.500-3.500-1.500z" stroke={G} /></Glyph>
          <Fit w={68}>Data Source</Fit>
        </SheetTab>
        <SheetTab $w={135}><Fit w={116}>Total World emission</Fit></SheetTab>
        <SheetTab $w={146} $active><Fit w={133.5}>Top Emitting Countries</Fit></SheetTab>
        {sheets.map(([s, w, tw]) => <SheetTab key={s} $w={w}><Fit w={tw}>{s}</Fit></SheetTab>)}
        <NewSheet>
          <Glyph x={1270} y={678} w={31} h={29}><path d="M1284 695.500h-4.500v-9h9v4.500M1282.500 693v-2M1284.500 693v-4M1286.500 692v-2" stroke={G} /><Plus x={1289} y={696.5} c={G} r={4} /></Glyph>
        </NewSheet>
        <NewSheet>
          <Glyph x={1302} y={678} w={31} h={29}><path d="M1318 695.500h-6.500v-9h11v5M1317.500 686.500v9M1311.500 691.500h11" stroke={G} strokeWidth="1.200" /><Plus x={1321} y={696.5} c={G} r={4} /></Glyph>
        </NewSheet>
        <NewSheet>
          <Glyph x={1334} y={678} w={31} h={29}><path d="M1349.500 696.500l-5.500-2v-8l5.500 2 5.500-2v6M1349.500 688.500v8" stroke={G} strokeWidth="1.200" /><Plus x={1354} y={696.5} c={G} r={4} /></Glyph>
        </NewSheet>
      </SheetTabs>
      <StatusBar>
        <StatusText>
          <Fit w={46}>10 marks</Fit>
          <Fit w={101}>1 row by 10 columns</Fit>
          <Fit w={102}>SUM(Co2): 780,082</Fit>
        </StatusText>
        <StatusCell $w={127} />
        <StatusCell $w={27} />
        <StatusCell $w={27} />
        <StatusCell $w={47} />
        <Glyph x={1228} y={708} w={138} h={20}>
          <path d="M1242 714v7l-4-3.500zM1257.500 714v7l-4-3.500zM1269 714v7l4-3.500zM1284 714v7l4-3.500z" fill={G} />
          <path d="M1236.500 714v7M1289.500 714v7" stroke={G} strokeWidth="1.300" />
          <path d="M1298.500 708v20" stroke="#c8c8c8" />
          <g fill="#bcbcbc">
            {[0, 4, 8].map((a) => [0, 4, 8].map((b) => <rect key={`${a}-${b}`} x={1307 + a} y={712 + b} width="3" height="3" />))}
            <path d="M1328 712h11v6.500h-11zM1328 720h3v3h-3zM1332 720h3v3h-3zM1336 720h3v3h-3z" />
          </g>
          <path d="M1349 712h11v11h-11z" fill="#666" />
        </Glyph>
      </StatusBar>
      <Taskbar />
    </Window>
  );
}
